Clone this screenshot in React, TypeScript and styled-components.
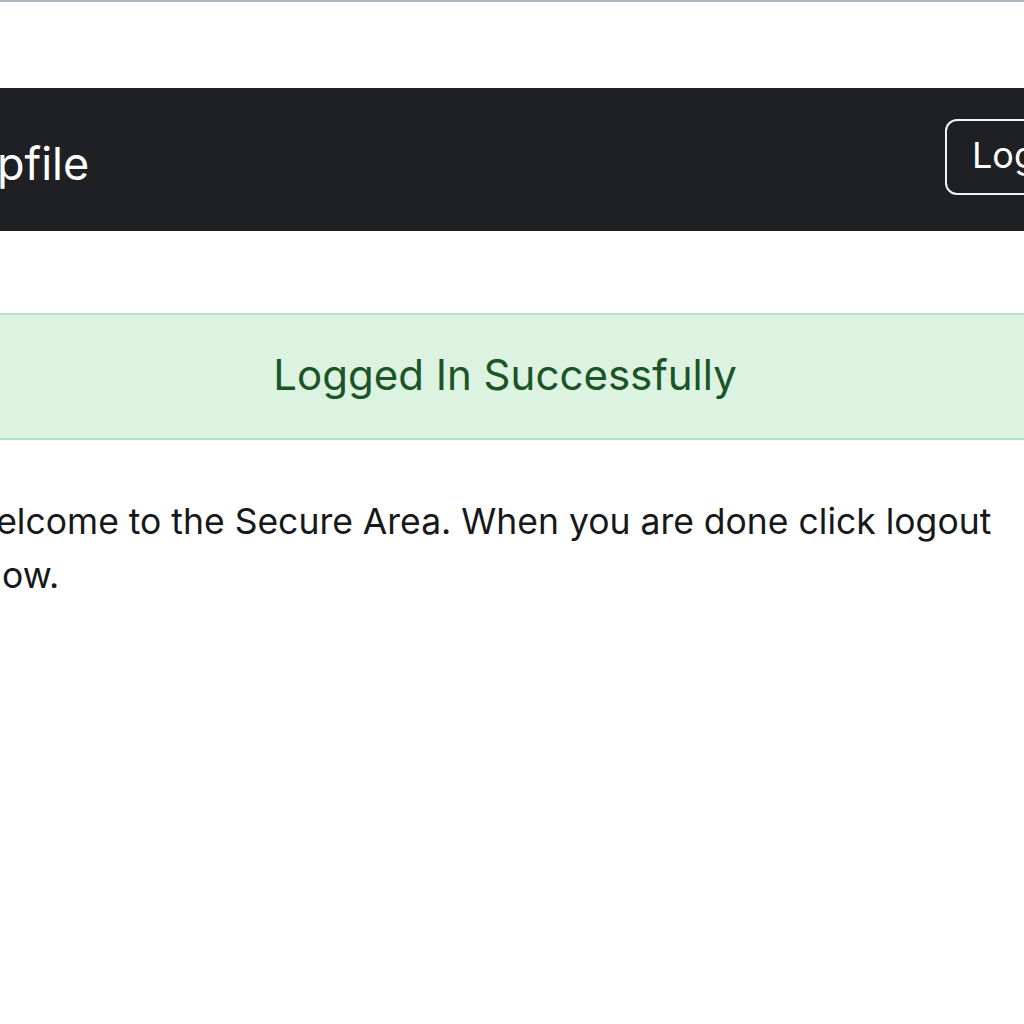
import styled, { createGlobalStyle } from 'styled-components';

const GlobalStyle = createGlobalStyle`
  html, body {
    margin: 0;
    padding: 0;
    background: #fff;
    overflow: hidden;
  }
  body {
    font-family: Inter, "Noto Sans", "Liberation Sans", sans-serif;
    color: #212529;
  }
`;

const TopRule = styled.div`
  height: 2px;
  background: #a8b7c0;
`;

const Page = styled.div`
  width: 1180px;
  margin-left: -34px;
`;

const Navbar = styled.nav`
  margin-top: 86px;
  height: 143px;
  background: #1f2024;
  display: flex;
  align-items: center;
  justify-content: space-between;
  padding: 0 31px;
  box-sizing: border-box;
`;

const Brand = styled.a`
  color: #fff;
  font-size: 45px;
  font-weight: 400;
  text-decoration: none;
  padding-top: 8px;
`;

const OutlineButton = styled.button`
  width: 170px;
  height: 76px;
  margin-bottom: 5px;
  border: 2px solid #f2f2f2;
  border-radius: 12px;
  background: transparent;
  color: #fff;
  font-family: inherit;
  font-size: 36px;
  text-align: left;
  padding: 0 0 4px 25px;
`;

const Content = styled.main`
  width: 1078px;
  margin-top: 82px;
`;

const Alert = styled.div`
  height: 127px;
  box-sizing: border-box;
  background: #dcf3e1;
  border-top: 2px solid #b5e3c2;
  border-bottom: 2px solid #b5e3c2;
  color: #1b5426;
  font-size: 42px;
  display: flex;
  align-items: center;
  justify-content: center;
  padding-bottom: 4px;
`;

const Message = styled.p`
  margin: 55px 0 0 -15px;
  text-indent: 12px;
  font-size: 35.5px;
  line-height: 54px;
  color: #17181a;
`;

export default function App() {
  return (
    <>
      <GlobalStyle />
      <TopRule />
      <Page>
        <Navbar>
          <Brand href="#">pfile</Brand>
          <OutlineButton>Logout</OutlineButton>
        </Navbar>
        <Content>
          <Alert>Logged In Successfully</Alert>
          <Message>
            Welcome to the Secure Area. When you are done click logout below.
          </Message>
        </Content>
      </Page>
    </>
  );
}
